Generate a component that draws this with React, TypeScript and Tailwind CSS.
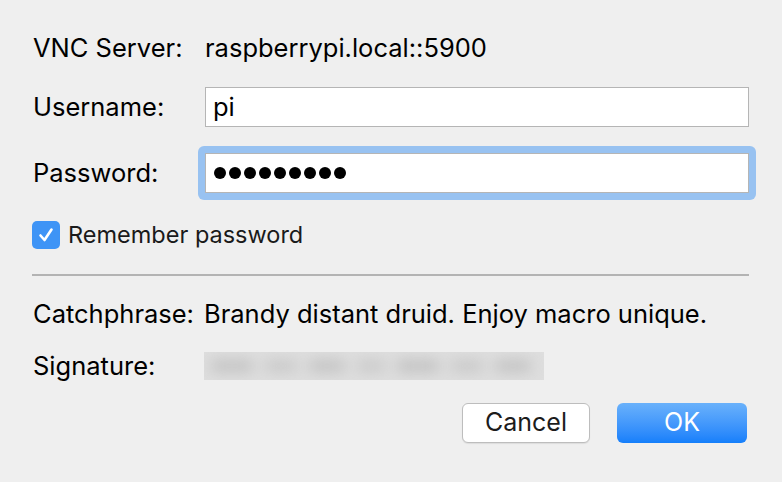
export default function App() {
  const dots = Array.from({ length: 9 });

  return (
    <div
      className="w-[782px] h-[482px] bg-[#efefef] text-black text-[25.5px] pl-[33px] pt-[28px] overflow-hidden"
      style={{ fontFamily: 'Inter, "Liberation Sans", sans-serif' }}
    >
      <div className="flex items-center h-[40px]">
        <div className="w-[172px]">VNC Server:</div>
        <div>raspberrypi.local::5900</div>
      </div>

      <div className="flex items-center h-[40px] mt-[19px]">
        <div className="w-[172px]">Username:</div>
        <div className="w-[544px] h-[40px] bg-white border border-[#b5b5b5] flex items-center px-[7px]">
          pi
        </div>
      </div>

      <div className="flex items-center h-[40px] mt-[26px]">
        <div className="w-[172px]">Password:</div>
        <div className="-ml-[7px] p-[7px] rounded-[6px] bg-[#98c2f1]">
          <div className="w-[544px] h-[40px] bg-white border border-[#b5b5b5] flex items-center pl-[8px] gap-[3px]">
            {dots.map((_, i) => (
              <span key={i} className="w-[12px] h-[12px] rounded-full bg-black" />
            ))}
          </div>
        </div>
      </div>

      <div className="flex items-center h-[28px] mt-[28px] -ml-[1px]">
        <div className="w-[28px] h-[28px] rounded-[5px] bg-[#3e94f6] flex items-center justify-center">
          <svg width="18" height="18" viewBox="0 0 18 18" fill="none">
            <path
              d="M3.5 9.5 L7.5 14 L14.5 3.5"
              stroke="white"
              strokeWidth="2.6"
              strokeLinecap="round"
              strokeLinejoin="round"
            />
          </svg>
        </div>
        <div className="ml-[8px] text-[23.5px] text-[#1a1a1a]">Remember password</div>
      </div>

      <div className="h-[2px] w-[717px] -ml-[1px] mt-[25px] bg-[#b3b3b3]" />

      <div className="flex items-center h-[40px] mt-[18px]">
        <div className="w-[171px]">Catchphrase:</div>
        <div>Brandy distant druid. Enjoy macro unique.</div>
      </div>

      <div className="flex items-center h-[28px] mt-[18px]">
        <div className="w-[171px]">Signature:</div>
        <div className="relative w-[340px] h-[28px] bg-[#dedede] overflow-hidden">
          <div className="absolute inset-0 flex items-center gap-[10px] px-[6px] blur-[7px]">
            <span className="w-[44px] h-[12px] bg-[#c2c2c2] rounded-full" />
            <span className="w-[34px] h-[12px] bg-[#c8c8c8] rounded-full" />
            <span className="w-[38px] h-[12px] bg-[#c2c2c2] rounded-full" />
            <span className="w-[30px] h-[12px] bg-[#c9c9c9] rounded-full" />
            <span className="w-[44px] h-[12px] bg-[#c1c1c1] rounded-full" />
            <span className="w-[34px] h-[12px] bg-[#c8c8c8] rounded-full" />
            <span className="w-[38px] h-[12px] bg-[#c2c2c2] rounded-full" />
          </div>
        </div>
      </div>

      <div className="flex justify-end gap-[27px] w-[714px] mt-[23px] text-[25px]">
        <div className="w-[128px] h-[40px] rounded-[6px] bg-white border border-[#bdbdbd] shadow-[0_1px_1px_rgba(0,0,0,0.08)] flex items-center justify-center text-[#1c1c1c]">
          Cancel
        </div>
        <div className="w-[130px] h-[40px] rounded-[6px] bg-gradient-to-b from-[#69b1fb] to-[#147ffb] flex items-center justify-center text-white">
          OK
        </div>
      </div>
    </div>
  );
}
